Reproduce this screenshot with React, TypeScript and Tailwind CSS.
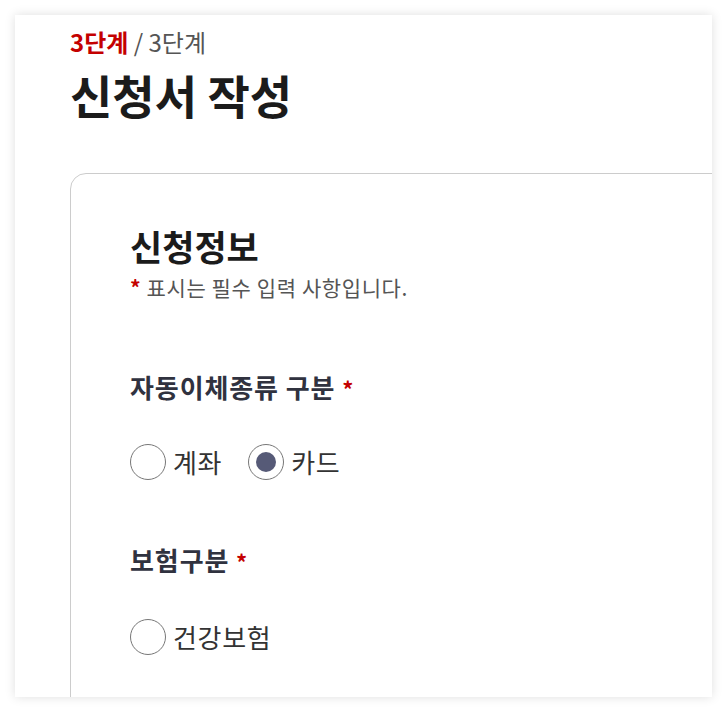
import React from "react";

const font = { fontFamily: '"Noto Sans CJK KR", "Noto Sans", sans-serif' };

function Radio({ label, checked }: { label: string; checked?: boolean }) {
  return (
    <label className="flex items-center gap-[7px]">
      <span className="flex h-[36px] w-[36px] items-center justify-center rounded-full border border-[#777] bg-white">
        {checked && <span className="h-[20px] w-[20px] rounded-full bg-[#565a77]" />}
      </span>
      <span className="text-[26px] leading-[36px] text-[#333] tracking-[0.7px]">{label}</span>
    </label>
  );
}

export default function App() {
  return (
    <div className="h-[712px] w-[727px] bg-white p-[15px]" style={font}>
      <div className="h-[682px] w-[697px] overflow-hidden bg-white pl-[55px] pt-[13px] shadow-[0_0_10px_rgba(0,0,0,0.13)]">
        <div className="text-[24px] leading-[28px] text-[#555]">
          <span className="font-bold text-[#c40000]">3단계</span> / 3단계
        </div>
        <h1 className="mt-[11px] text-[46px] font-bold leading-[54px] text-[#1b1b1b]">신청서 작성</h1>
        <div className="mt-[52px] h-[600px] w-[700px] rounded-tl-[16px] border border-[#cccccc] pl-[59px] pt-[52px]">
          <h2 className="text-[35px] font-bold leading-[40px] text-[#1b1b1b]">신청정보</h2>
          <p className="mt-[8px] text-[21px] leading-[26px] text-[#555] tracking-[0.6px]">
            <span className="font-bold text-[#c40000]">*</span> 표시는 필수 입력 사항입니다.
          </p>
          <div className="mt-[71px] text-[26px] font-bold leading-[32px] text-[#30323f] tracking-[0.9px]">
            자동이체종류 구분 <span className="text-[22px] text-[#c40000]">*</span>
          </div>
          <div className="mt-[40px] flex items-center gap-[26px]">
            <Radio label="계좌" />
            <Radio label="카드" checked />
          </div>
          <div className="mt-[64px] text-[26px] font-bold leading-[32px] text-[#30323f] tracking-[0.9px]">
            보험구분 <span className="text-[22px] text-[#c40000]">*</span>
          </div>
          <div className="mt-[42px] flex items-center">
            <Radio label="건강보험" />
          </div>
        </div>
      </div>
    </div>
  );
}
